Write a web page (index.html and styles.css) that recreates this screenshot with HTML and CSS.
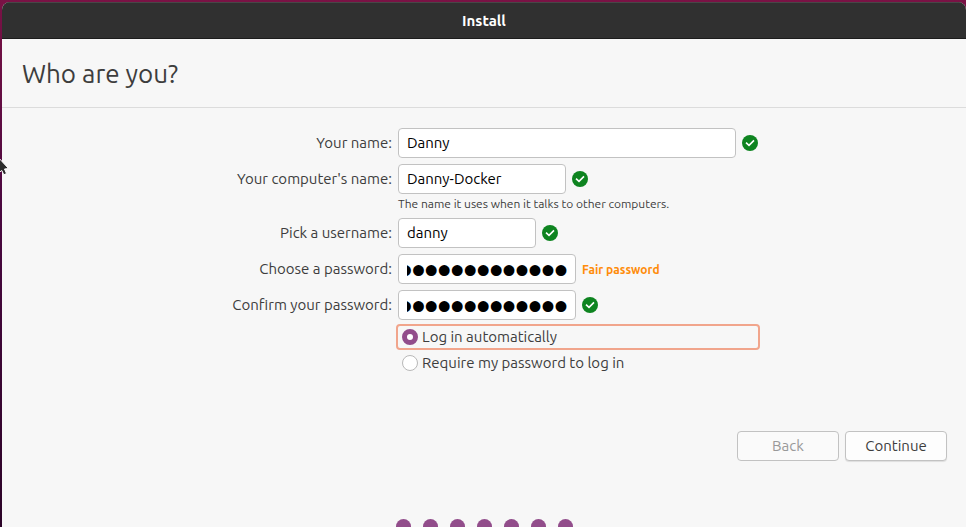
FILE: index.html
```html
<!DOCTYPE html>
<html lang="en">
<head>
  <meta charset="UTF-8" />
  <meta name="viewport" content="width=device-width, initial-scale=1.0"/>
  <title>Install</title>
  <link rel="stylesheet" href="styles.css">
</head>
<body>

  <!-- Shared check icon -->
  <svg class="sprite" aria-hidden="true">
    <symbol id="check" viewBox="0 0 16 16">
      <circle cx="8" cy="8" r="8" fill="#0e8420"/>
      <path d="M4 7.6 L7 10.4 L12 5.4" fill="none" stroke="#fff" stroke-width="1.6"/>
    </symbol>
  </svg>

  <div class="window">
    <header class="titlebar">Install</header>

    <div class="page-header">
      <h1>Who are you?</h1>
    </div>

    <main>
      <form id="userForm">
        <label for="name">Your name:</label>
        <div class="field">
          <input type="text" id="name" class="name-input" value="Danny">
          <svg class="check"><use href="#check"/></svg>
        </div>

        <label for="hostname">Your computer's name:</label>
        <div class="field">
          <input type="text" id="hostname" class="host-input" value="Danny-Docker">
          <svg class="check"><use href="#check"/></svg>
          <p class="hint">The name it uses when it talks to other computers.</p>
        </div>

        <label for="username">Pick a username:</label>
        <div class="field">
          <input type="text" id="username" class="user-input" value="danny">
          <svg class="check"><use href="#check"/></svg>
        </div>

        <label for="password">Choose a password:</label>
        <div class="field">
          <input type="password" id="password" class="password-input" value="danny-docker-1">
          <span class="strength">Fair password</span>
        </div>

        <label for="confirm">Confirm your password:</label>
        <div class="field">
          <input type="password" id="confirm" class="password-input" value="danny-docker-1">
          <svg class="check"><use href="#check"/></svg>
        </div>

        <div class="login-options">
          <label class="option focused"><input type="radio" name="login" checked>Log in automatically</label>
          <label class="option"><input type="radio" name="login">Require my password to log in</label>
        </div>
      </form>

      <div class="actions">
        <button type="button" disabled>Back</button>
        <button type="submit" form="userForm">Continue</button>
      </div>

      <div class="progress">
        <span></span><span></span><span></span><span></span><span></span><span></span><span></span>
      </div>
    </main>
  </div>

  <svg class="cursor" viewBox="0 0 10 20" aria-hidden="true">
    <path d="M-3 -2 L8.5 10.5 L4.5 11 L6.5 15.5 L3.8 16.8 L1.8 12.5 L-3 16 Z" fill="#2b2b2b" stroke="#fff" stroke-width="1"/>
  </svg>

  <script>
    // keep the end of the password in view
    document.querySelectorAll('.password-input').forEach(function(input) {
      input.scrollLeft = input.scrollWidth;
    });
    document.getElementById('userForm').addEventListener('submit', function(e) {
      e.preventDefault();
    });
  </script>

</body>
</html>
```
FILE: styles.css
```css
:root {
  --bg: #f7f7f7;
  --text: #3d3d3d;
  --border: #c2c2c2;
  --purple: #924d8b;
  --orange: #f1a58c;
  --titlebar: #303030;
}

* {
  box-sizing: border-box;
}

body {
  margin: 0;
  height: 100vh;
  padding: 2px 0 0 2px;
  overflow: hidden;
  background: linear-gradient(to bottom, #7a1245, #4a0840 40%, #2c0428);
  font-family: "Ubuntu", "Noto Sans", sans-serif;
  font-size: 15px;
  color: var(--text);
}

.sprite {
  display: none;
}

.window {
  height: 100%;
  overflow: hidden;
  background: var(--bg);
  border-radius: 8px 8px 0 0;
}

.titlebar {
  height: 37px;
  line-height: 36px;
  background: var(--titlebar);
  border-top: 1px solid #474747;
  border-bottom: 1px solid #1c1c1c;
  color: white;
  font-weight: bold;
  text-align: center;
}

.page-header {
  padding: 17px 20px 15px;
  border-bottom: 1px solid #dcdcdc;
}

h1 {
  margin: 0;
  font-size: 26px;
  line-height: 36px;
  font-weight: normal;
}

main {
  padding: 20px 19px 0 20px;
}

form {
  display: grid;
  grid-template-columns: 40% 1fr;
  gap: 6px;
}

form > label {
  line-height: 30px;
  text-align: right;
}

.field {
  display: flex;
  flex-wrap: wrap;
  align-items: center;
  column-gap: 6px;
}

.field input {
  height: 30px;
  padding: 0 8px 2px;
  border: 1px solid var(--border);
  border-radius: 4px;
  background: white;
  color: black;
  font: inherit;
}

.field .name-input {
  width: 338px;
}

.field .host-input {
  width: 168px;
}

.field .user-input {
  width: 138px;
}

.field .password-input {
  width: 178px;
  padding: 4px 8px 0;
  font-family: "Liberation Serif", serif;
  font-size: 37px;
  -webkit-text-stroke: 2px black;
}

.check {
  width: 16px;
  height: 16px;
}

.hint {
  width: 100%;
  margin: 0 0 -2px;
  font-size: 12px;
  line-height: 20px;
}

.strength {
  color: #ff8c0a;
  font-size: 12px;
  font-weight: bold;
}

.login-options {
  grid-column: 2;
  width: 364px;
  margin: -2px 0 0 -2px;
}

.option {
  display: flex;
  align-items: center;
  gap: 4px;
  height: 26px;
  padding: 0 4px;
  border: 2px solid transparent;
  border-radius: 4px;
  line-height: 22px;
}

.option.focused {
  border-color: var(--orange);
}

.option input {
  appearance: none;
  width: 16px;
  height: 16px;
  margin: 0;
  border: 1px solid #b8b8b8;
  border-radius: 50%;
  background: white;
}

.option input:checked {
  border: 5px solid var(--purple);
}

.actions {
  display: flex;
  justify-content: flex-end;
  gap: 6px;
  margin-top: 55px;
}

.actions button {
  width: 102px;
  height: 30px;
  padding: 0 6px 2px;
  border: 1px solid var(--border);
  border-radius: 4px;
  background: #fdfdfd;
  box-shadow: 0 1px 1px rgba(0, 0, 0, 0.1);
  color: var(--text);
  font: inherit;
}

.actions button:disabled {
  background: #fafafa;
  box-shadow: none;
  color: #999;
}

.progress {
  display: flex;
  justify-content: center;
  gap: 12px;
  margin-top: 58px;
}

.progress span {
  width: 15px;
  height: 15px;
  border-radius: 50%;
  background: var(--purple);
}

.cursor {
  position: absolute;
  left: 0;
  top: 158px;
  width: 10px;
  height: 20px;
}
```
